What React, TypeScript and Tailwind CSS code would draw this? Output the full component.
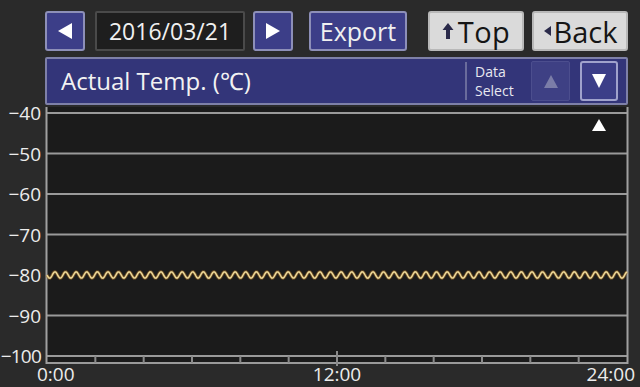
import React from "react";

const gridYs = [6, 46.5, 87, 127.5, 208.5, 249];
const labels = ["−40", "−50", "−60", "−70", "−80", "−90", "−100"];

function wavePath() {
  // señal casi plana alrededor de -80 ℃
  const pts: string[] = [];
  for (let x = 47; x <= 627; x += 1) {
    const y = 168 + 3.2 * Math.sin((x - 47) * (2 * Math.PI / 10.6));
    pts.push(`${x === 47 ? "M" : "L"}${x},${y.toFixed(2)}`);
  }
  return pts.join(" ");
}

const NavButton = ({ dir }: { dir: "left" | "right" }) => (
  <button className="flex h-[40px] w-[40px] items-center justify-center rounded-[3px] border-2 border-[#8d8fb8] bg-[#3c3e88]">
    <svg width="20" height="20" viewBox="0 0 20 20">
      {dir === "left" ? (
        <polygon points="17,2 17,18 3,10" fill="#ffffff" />
      ) : (
        <polygon points="3,2 3,18 17,10" fill="#ffffff" />
      )}
    </svg>
  </button>
);

const Chart = () => {
  const ticks: number[] = [];
  for (let h = 2; h < 24; h += 2) ticks.push(47 + (580 * h) / 24);
  return (
    <svg width="640" height="280" viewBox="0 0 640 280" className="block overflow-visible">
      <rect x="47" y="0" width="580" height="256" fill="#1b1b1b" />
      {gridYs.map((y) => (
        <line key={y} x1="47" x2="627" y1={y} y2={y} stroke="#9a9a9a" strokeWidth="2" />
      ))}
      <line x1="47" x2="627" y1="256" y2="256" stroke="#9a9a9a" strokeWidth="2" />
      {ticks.map((x) => (
        <line
          key={x}
          x1={x}
          x2={x}
          y1={x === 337 ? 244 : 249}
          y2={x === 337 ? 259 : 256}
          stroke="#8a8a8a"
          strokeWidth="2"
        />
      ))}
      <line x1="46.5" x2="46.5" y1="0" y2="257" stroke="#a0a0a0" strokeWidth="2" />
      <line x1="627.5" x2="627.5" y1="0" y2="257" stroke="#a0a0a0" strokeWidth="2" />
      <path d={wavePath()} fill="none" stroke="#a8702a" strokeWidth="3.2" opacity="0.55" />
      <path d={wavePath()} fill="none" stroke="#ecd898" strokeWidth="1.5" />
      <polygon points="592,24 606,24 599,12" fill="#ffffff" />
      {labels.map((t, i) => (
        <text
          key={t}
          x="41"
          y={6 + i * 40.5 + 7}
          textAnchor="end"
          fill="#ececec"
          fontSize="19"
          letterSpacing={t.length > 3 ? "-0.8" : "0"}
          fontFamily="'Open Sans', sans-serif"
        >
          {t}
        </text>
      ))}
      <text x="37" y="274" fill="#ececec" fontSize="19" fontFamily="'Open Sans', sans-serif">
        0:00
      </text>
      <text x="337" y="274" textAnchor="middle" fill="#ececec" fontSize="19" fontFamily="'Open Sans', sans-serif">
        12:00
      </text>
      <text x="635" y="274" textAnchor="end" fill="#ececec" fontSize="19" fontFamily="'Open Sans', sans-serif">
        24:00
      </text>
    </svg>
  );
};

export default function App() {
  return (
    <div className="h-[387px] w-[640px] overflow-hidden bg-[#2a2a2a] font-['Open_Sans',sans-serif]">
      {/* barra superior */}
      <div className="flex items-center pl-[45px] pt-[11px]">
        <NavButton dir="left" />
        <div className="ml-[10px] flex h-[40px] w-[150px] items-center justify-center rounded-[2px] border-2 border-[#4a4a4a] bg-[#1e1e1e] text-[23px] text-[#f0f0f0]">
          2016/03/21
        </div>
        <div className="ml-[8px]">
          <NavButton dir="right" />
        </div>
        <button className="ml-[16px] flex h-[40px] w-[98px] items-center justify-center rounded-[3px] border-2 border-[#8d8fb8] bg-[#3c3e88] text-[25px] leading-none text-[#f0f0f0]">
          Export
        </button>
        <button className="ml-[21px] flex h-[40px] w-[96px] items-center justify-center gap-[4px] rounded-[3px] border-2 border-[#b8b8b8] bg-[#dadada] text-[29px] leading-none tracking-[0.5px] text-[#151515]">
          <svg width="12" height="18" viewBox="0 0 12 18">
            <polygon points="6,1 11.5,8 8,8 8,17 4,17 4,8 0.5,8" fill="#2a2a4a" />
          </svg>
          Top
        </button>
        <button className="ml-[8px] flex h-[40px] w-[96px] items-center justify-center gap-[2px] rounded-[3px] border-2 border-[#b8b8b8] bg-[#dadada] text-[29px] leading-none text-[#151515]">
          <svg width="9" height="12" viewBox="0 0 9 12">
            <polygon points="8,1 8,11 1,6" fill="#2a2a4a" />
          </svg>
          Back
        </button>
      </div>

      {/* cabecera del gráfico */}
      <div className="ml-[45px] mt-[6px] flex h-[48px] w-[583px] items-center rounded-[2px] border-2 border-[#7e80a8] bg-[#333579]">
        <div className="flex-1 pl-[14px] text-[24px] text-[#f2f2f2]">Actual Temp. (℃)</div>
        <div className="h-[38px] w-[2px] bg-[#6a6c9c]" />
        <div className="ml-[8px] flex w-[52px] flex-col text-[14px] leading-[19px] text-[#e8e8f0]">
          <span>Data</span>
          <span>Select</span>
        </div>
        <div className="ml-[4px] flex h-[40px] w-[39px] items-center justify-center rounded-[2px] border border-[#4c4e8e] bg-[#3e4084]">
          <svg width="20" height="18" viewBox="0 0 20 18">
            <polygon points="3,16 17,16 10,3" fill="#7b7da8" />
          </svg>
        </div>
        <div className="ml-[10px] mr-[8px] flex h-[40px] w-[38px] items-center justify-center rounded-[3px] border-2 border-[#a0a2cc] bg-[#3c3e88]">
          <svg width="20" height="18" viewBox="0 0 20 18">
            <polygon points="3,2 17,2 10,16" fill="#ffffff" />
          </svg>
        </div>
      </div>

      <div className="mt-[2px]">
        <Chart />
      </div>
    </div>
  );
}
